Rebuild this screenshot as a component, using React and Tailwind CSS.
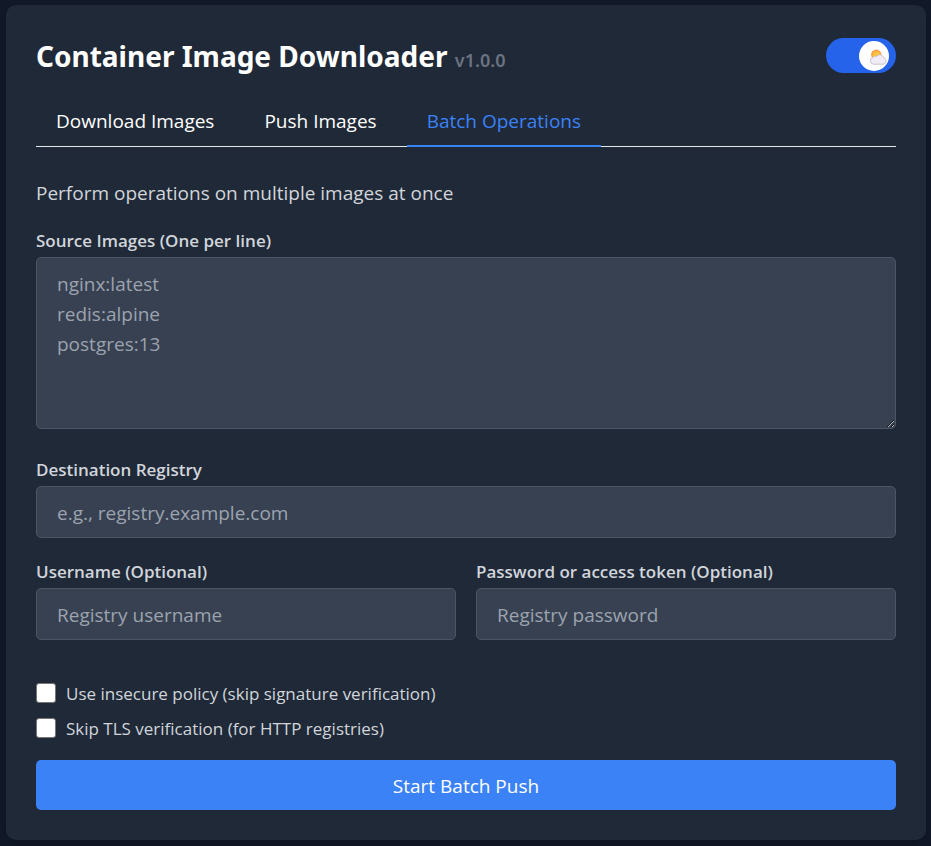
import { useState } from "react";

const TABS = ["Download Images", "Push Images", "Batch Operations"];

const field =
  "block w-full rounded-[5px] border border-[#4b5563] bg-[#374151] px-5 pt-[11px] pb-[9px] text-[19px] leading-[30px] text-white placeholder:text-[#9ca3af] focus:outline-none focus:border-blue-500";
const fieldLabel = "mb-1 block text-[17px] leading-[25px] font-semibold text-[#d1d5db]";

function CloudSun() {
  return (
    <svg className="h-5 w-5" viewBox="0 0 20 20" aria-hidden="true">
      <circle cx="7.2" cy="8.6" r="4.7" fill="#ff9a3c" stroke="#ff8a3a" strokeWidth="1" strokeDasharray="1.4 1" />
      <circle cx="7.4" cy="8.9" r="3.8" fill="#fcc23c" />
      <path
        d="M4.5 18.2a3.5 3.5 0 0 1-.4-6.9 3.3 3.3 0 0 1 3.5-1 4.4 4.4 0 0 1 7.4 1.7 3.2 3.2 0 0 1-.7 6.2z"
        fill="#f0ebf7"
        stroke="#c4bfcc"
        strokeWidth="0.9"
      />
    </svg>
  );
}

function Check({ id, children }) {
  return (
    <div className="flex items-start gap-[10px]">
      <input
        id={id}
        type="checkbox"
        className="mt-[2px] h-5 w-5 shrink-0 appearance-none rounded-[3px] border border-[#767676] bg-white checked:bg-blue-500"
      />
      <label htmlFor={id} className="text-[17px] leading-[25px] text-[#d1d5db]">
        {children}
      </label>
    </div>
  );
}

export default function App() {
  const [tab, setTab] = useState("Batch Operations");
  return (
    <div className="min-h-screen bg-[#111827] py-[5px] pr-[5px] pl-[6px] font-['Open_Sans','Noto_Sans',sans-serif]">
      <main className="rounded-[10px] bg-[#1f2937] p-[30px] shadow-lg">
        <header className="flex items-start justify-between">
          <h1 className="font-['Noto_Sans','Open_Sans',sans-serif] text-[28px] leading-[42px] font-bold text-white">
            Container Image Downloader <span className="text-[18px] font-semibold text-[#6b7280]">v1.0.0</span>
          </h1>
          <button
            type="button"
            aria-label="Toggle theme"
            className="mt-[3px] flex h-[35px] w-[70px] items-center justify-end rounded-full bg-[#2563eb] pr-[7px]"
          >
            <span className="flex h-[30px] w-[30px] items-center justify-end rounded-full bg-white">
              <CloudSun />
            </span>
          </button>
        </header>

        <nav className="mt-[15px] flex gap-[10px] border-b border-[#e5e7eb]">
          {TABS.map((name) => (
            <button
              key={name}
              type="button"
              onClick={() => setTab(name)}
              className={
                "-mb-px border-b-2 px-5 pt-[10px] pb-[9px] text-[19px] leading-[30px] " +
                (tab === name ? "border-[#3b82f6] text-[#3b82f6]" : "border-transparent text-white")
              }
            >
              {name}
            </button>
          ))}
        </nav>

        <form onSubmit={(e) => e.preventDefault()}>
          <p className="mt-[31px] text-[19px] leading-[30px] text-[#d1d5db]">
            Perform operations on multiple images at once
          </p>

          <div className="mt-5">
            <label htmlFor="images" className={fieldLabel}>
              Source Images (One per line)
            </label>
            <textarea id="images" rows={5} className={field} placeholder={"nginx:latest\nredis:alpine\npostgres:13"} />
          </div>

          <div className="mt-7">
            <label htmlFor="registry" className={fieldLabel}>
              Destination Registry
            </label>
            <input id="registry" type="text" className={field} placeholder="e.g., registry.example.com" />
          </div>

          <div className="mt-[21px] grid grid-cols-2 gap-5">
            <div>
              <label htmlFor="username" className={fieldLabel}>
                Username (Optional)
              </label>
              <input id="username" type="text" className={field} placeholder="Registry username" />
            </div>
            <div>
              <label htmlFor="password" className={fieldLabel}>
                Password or access token (Optional)
              </label>
              <input id="password" type="password" className={field} placeholder="Registry password" />
            </div>
          </div>

          <div className="mt-[41px] space-y-[10px]">
            <Check id="insecure">Use insecure policy (skip signature verification)</Check>
            <Check id="tls">Skip TLS verification (for HTTP registries)</Check>
          </div>

          <button
            type="submit"
            className="mt-[19px] block w-full rounded-[5px] bg-[#3b82f6] pt-[11px] pb-[9px] text-[19px] leading-[30px] text-white"
          >
            Start Batch Push
          </button>
        </form>
      </main>
    </div>
  );
}
